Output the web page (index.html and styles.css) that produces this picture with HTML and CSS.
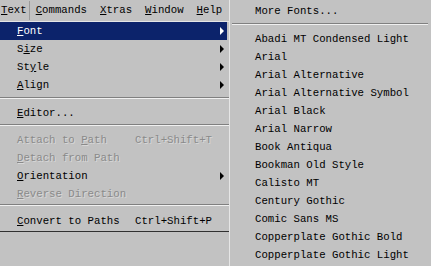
FILE: index.html
```html
<!DOCTYPE html>
<html lang="en">
<head>
  <meta charset="UTF-8">
  <title>Text menu - Font</title>
  <link rel="stylesheet" href="styles.css">
</head>
<body>
  <div class="screen">
    <div class="left">
      <div class="menubar">
        <span class="top pressed"><u>T</u>ext</span>
        <span class="top"><u>C</u>ommands</span>
        <span class="top"><u>X</u>tras</span>
        <span class="top"><u>W</u>indow</span>
        <span class="top"><u>H</u>elp</span>
      </div>

      <ul class="menu">
        <li class="item active sub"><span class="label"><u>F</u>ont</span></li>
        <li class="item sub"><span class="label">S<u>i</u>ze</span></li>
        <li class="item sub"><span class="label">St<u>y</u>le</span></li>
        <li class="item sub"><span class="label"><u>A</u>lign</span></li>
        <li class="sep sep1"></li>
        <li class="item"><span class="label"><u>E</u>ditor...</span></li>
        <li class="sep sep2"></li>
        <li class="item off"><span class="label">Attach to <u>P</u>ath</span><span class="keys">Ctrl+Shift+T</span></li>
        <li class="item off"><span class="label"><u>D</u>etach from Path</span></li>
        <li class="item sub"><span class="label"><u>O</u>rientation</span></li>
        <li class="item off"><span class="label"><u>R</u>everse Direction</span></li>
        <li class="sep sep3"></li>
        <li class="item"><span class="label"><u>C</u>onvert to Paths</span><span class="keys">Ctrl+Shift+P</span></li>
      </ul>
      <div class="menu-end"></div>
    </div>

    <ul class="fonts">
      <li class="font more">More Fonts...</li>
      <li class="sep"></li>
      <li class="font">Abadi MT Condensed Light</li>
      <li class="font">Arial</li>
      <li class="font">Arial Alternative</li>
      <li class="font">Arial Alternative Symbol</li>
      <li class="font">Arial Black</li>
      <li class="font">Arial Narrow</li>
      <li class="font">Book Antiqua</li>
      <li class="font">Bookman Old Style</li>
      <li class="font">Calisto MT</li>
      <li class="font">Century Gothic</li>
      <li class="font">Comic Sans MS</li>
      <li class="font">Copperplate Gothic Bold</li>
      <li class="font">Copperplate Gothic Light</li>
    </ul>
  </div>
</body>
</html>
```

FILE: styles.css
```css
body {
  margin: 0;
  background: #c2c2c2;
  font-family: "Liberation Mono", "DejaVu Sans Mono", monospace;
  font-size: 10.7px;
  color: #000;
}
ul {
  list-style: none;
  margin: 0;
  padding: 0;
}
u {
  text-decoration: underline;
  text-underline-offset: 1px;
}
.screen {
  display: flex;
  width: 431px;
  height: 266px;
  overflow: hidden;
}

/* left side: menu bar + Text menu */
.left {
  width: 229px;
  border-right: 1px solid #e6e6e6;
}
.menubar {
  display: flex;
  height: 21px;
  align-items: center;
}
.top {
  padding: 0 7px 0 6px;
  line-height: 19px;
  white-space: nowrap;
}
.top.pressed {
  padding: 0 2px 0 1px;
  border-right: 1px solid #9a9a9a;
}
.menu {
  border-top: 1px solid #e6e6e6;
}
.item {
  position: relative;
  display: flex;
  height: 18px;
  line-height: 18px;
  padding-left: 17px;
}
.label {
  width: 118px;
  white-space: nowrap;
}
.keys {
  white-space: nowrap;
}
.item.active {
  background: #0c236b;
  color: #fff;
  margin-right: 2px;
}
.item.off {
  color: #8a8a8a;
  text-shadow: 1px 1px 0 #d8d8d8;
}
.item.sub::after {
  content: "";
  position: absolute;
  right: 5px;
  top: 5px;
  border-left: 4px solid #000;
  border-top: 4px solid transparent;
  border-bottom: 4px solid transparent;
}
.item.active.sub::after {
  right: 3px;
  border-left-color: #fff;
}
.sep {
  height: 10px;
}
.sep::before {
  content: "";
  display: block;
  border-top: 1px solid #808080;
  border-bottom: 1px solid #f0f0f0;
}
.sep1 {
  height: 10px;
  padding-top: 3px;
  box-sizing: border-box;
}
.sep2 {
  height: 9px;
  padding-top: 2px;
  box-sizing: border-box;
}
.sep3 {
  height: 9px;
  padding-top: 1px;
  box-sizing: border-box;
}
.menu-end {
  margin-top: 1px;
  border-top: 1px solid #303030;
}

/* right side: Font submenu */
.fonts {
  flex: 1;
  padding-top: 2px;
}
.font {
  height: 18px;
  line-height: 18px;
  padding-left: 25px;
  white-space: nowrap;
}
.fonts .sep {
  height: 10px;
  padding: 3px 3px 0 2px;
  box-sizing: border-box;
}
```
